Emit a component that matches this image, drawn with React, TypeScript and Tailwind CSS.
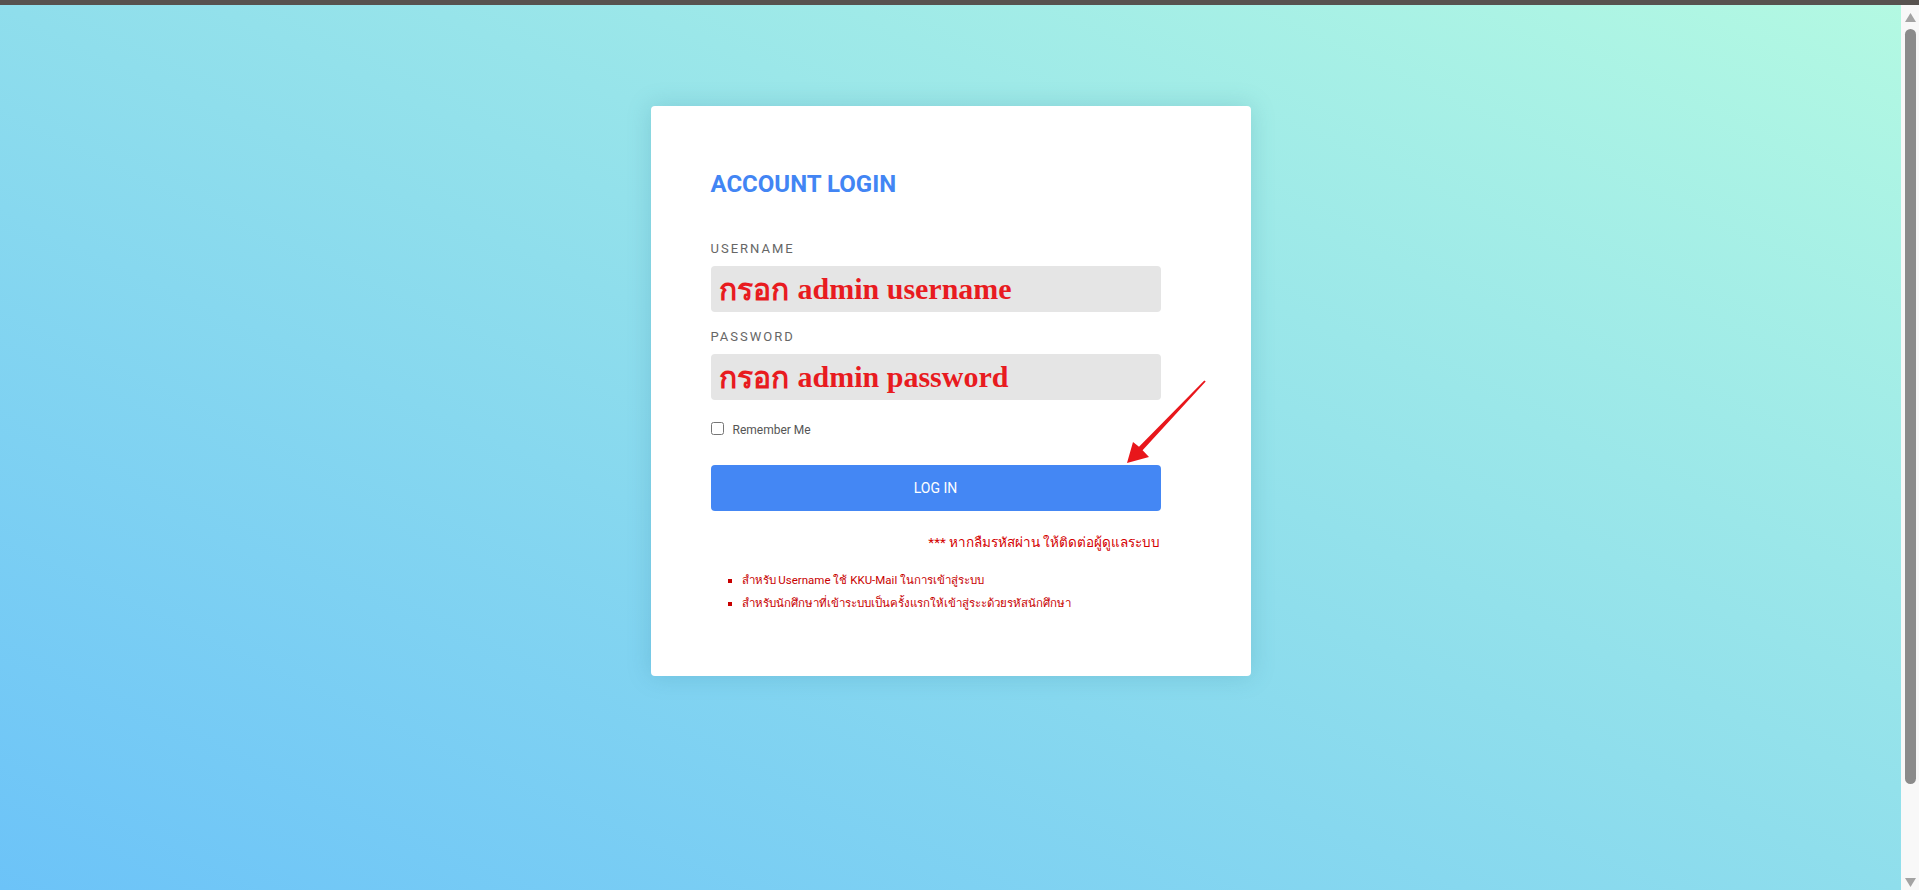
const notes = [
  "สำหรับ Username ใช้ KKU-Mail ในการเข้าสู่ระบบ",
  "สำหรับนักศึกษาที่เข้าระบบเป็นครั้งแรกให้เข้าสู่ระะด้วยรหัสนักศึกษา",
];

const FakeScrollbar = () => (
  <div className="flex w-[18px] shrink-0 flex-col items-center bg-[#f8f8f8] pb-[3px] pt-[8px]">
    <svg width="11" height="9" viewBox="0 0 11 9">
      <polygon points="5.5,0 11,9 0,9" fill="#a3a3a3" />
    </svg>
    <div className="mt-[7px] h-[755px] w-[11px] rounded-full bg-[#8b8b8b]" />
    <div className="flex-1" />
    <svg width="11" height="9" viewBox="0 0 11 9">
      <polygon points="0,0 11,0 5.5,9" fill="#a3a3a3" />
    </svg>
  </div>
);

const FieldValue = ({ text }: { text: string }) => (
  <div className="flex h-[46px] items-center rounded-[4px] bg-[#e5e5e5] pl-[8px] text-[#e81b1f]">
    <span className="font-['Noto_Sans',sans-serif] text-[30px] font-extrabold leading-none">
      กรอก
    </span>
    <span className="ml-[9px] font-['Liberation_Serif',serif] text-[30px] font-bold leading-none">
      {text}
    </span>
  </div>
);

export default function App() {
  return (
    <div className="flex h-[890px] w-full flex-col overflow-hidden font-['Roboto',sans-serif]">
      <div className="h-[5px] w-full bg-[#57524f]" />
      <div className="flex min-h-0 flex-1">
        <main className="flex flex-1 justify-center bg-linear-to-tr from-[#6cc3f8] via-[#8fdeec] to-[#b3f9e2] pt-[101px]">
          <div className="relative h-[570px] w-[600px] rounded-[4px] bg-white px-[60px] pt-[64px] shadow-[0_0_24px_rgba(40,120,140,0.22)]">
            <h1 className="text-[24px] font-bold leading-[29px] text-[#4285f4]">
              ACCOUNT LOGIN
            </h1>

            <div className="w-[450px]">
              <label className="mt-[40px] mb-[7px] block text-[13px] leading-[20px] tracking-[2px] text-[#666]">
                USERNAME
              </label>
              <FieldValue text="admin username" />

              <label className="mt-[15px] mb-[7px] block text-[13px] leading-[20px] tracking-[2px] text-[#666]">
                PASSWORD
              </label>
              <FieldValue text="admin password" />

              <label className="mt-[18px] flex h-[20px] items-center gap-[9px] text-[12px] text-[#555]">
                <input type="checkbox" className="h-[13px] w-[13px]" />
                <span className="pt-[3px]">Remember Me</span>
              </label>

              <button
                type="button"
                className="mt-[27px] h-[46px] w-full rounded-[4px] bg-[#4487f4] text-[14px] text-white"
              >
                LOG IN
              </button>

              <p className="mt-[21px] text-right text-[13.5px] leading-[20px] text-[#d40000]">
                *** หากลืมรหัสผ่าน ให้ติดต่อผู้ดูแลระบบ
              </p>

              <ul className="mt-[17px]">
                {notes.map((n) => (
                  <li
                    key={n}
                    className="flex h-[23px] items-center pl-[17px] text-[11.5px] text-[#c80000]"
                  >
                    <span className="mr-[10px] h-[4px] w-[4px] bg-[#c80000]" />
                    {n}
                  </li>
                ))}
              </ul>
            </div>

            {/* red annotation arrow pointing at the login button */}
            <svg
              className="pointer-events-none absolute left-0 top-0 overflow-visible"
              width="600"
              height="570"
            >
              <polygon
                points="553.3,274.6 488,340.8 482,336 476,357 498,351 491.6,344.2 554.7,275.4"
                fill="#e8161b"
              />
            </svg>
          </div>
        </main>
        <FakeScrollbar />
      </div>
    </div>
  );
}
